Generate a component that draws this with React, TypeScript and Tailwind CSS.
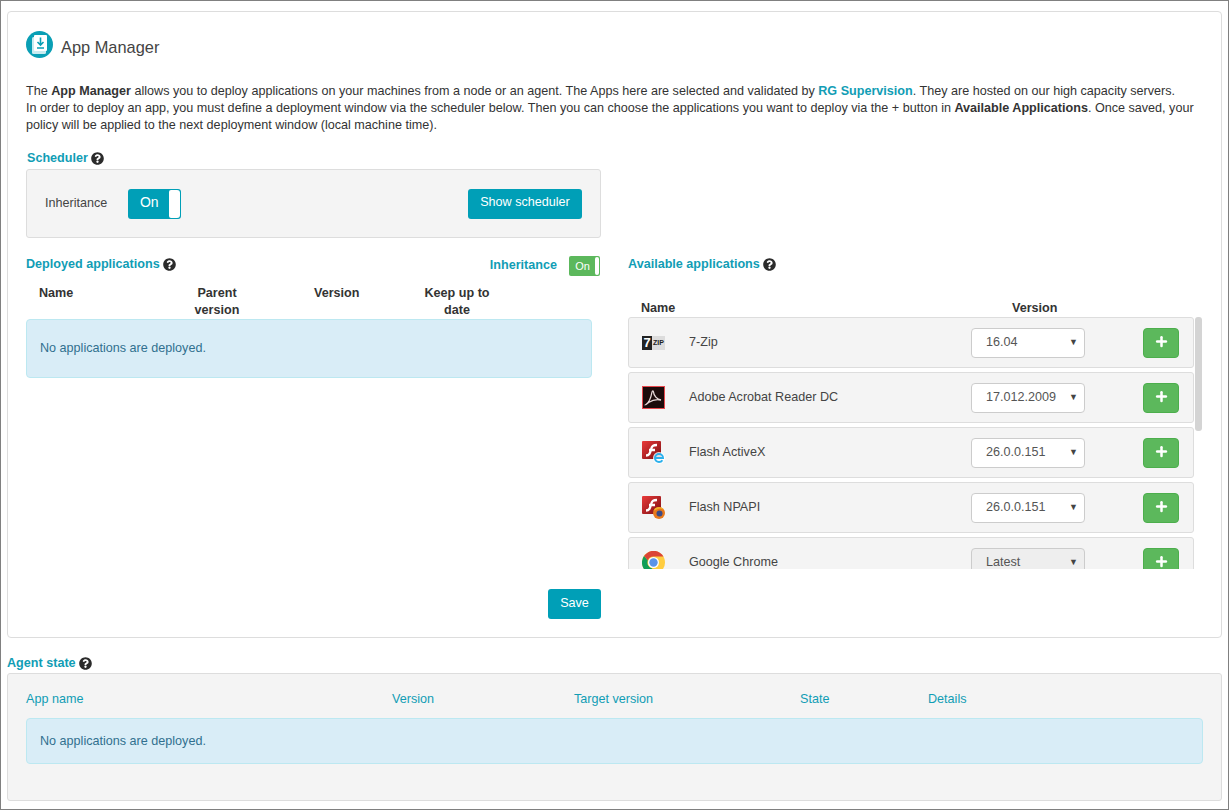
import { Plus } from "lucide-react"
import { FaQuestionCircle } from "react-icons/fa"

const teal = "text-[#119db5]"

function Help() {
  return <FaQuestionCircle size={13} className="text-[#2b2b2b] inline-block" />
}

function SectionTitle({ children }: { children: React.ReactNode }) {
  return (
    <div className={`flex items-center gap-[3px] font-bold text-[12.6px] leading-[17px] ${teal}`}>
      {children} <Help />
    </div>
  )
}

function Toggle({ big }: { big?: boolean }) {
  if (big) return (
    <div className="w-[53px] h-[30px] rounded-[3px] bg-[#009fb7] flex items-center p-[1px]">
      <span className="flex-1 text-center text-white text-[14px] leading-[26px] pb-[3px]">On</span>
      <span className="w-[11px] h-[28px] bg-white rounded-r-[3px] rounded-l-[2px]"></span>
    </div>
  )
  return (
    <div className="w-[31px] h-[20px] rounded-[2px] bg-[#5cb85c] flex items-center p-[1px]">
      <span className="flex-1 text-center text-white text-[11px] leading-[18px]">On</span>
      <span className="w-[4px] h-[18px] bg-white rounded-[2px]"></span>
    </div>
  )
}

function SevenZip() {
  return (
    <div className="w-[23px] h-[14px] flex items-stretch bg-[#dcdcdc]">
      <span className="w-[10px] bg-[#222222] text-white text-[13px] font-bold leading-[14px] text-center">7</span>
      <span className="flex-1 text-[#222] text-[7px] font-bold leading-[14px] text-center">ZIP</span>
    </div>
  )
}

function Acrobat() {
  return (
    <svg width="23" height="23" viewBox="0 0 23 23">
      <rect x="0.5" y="0.5" width="22" height="22" fill="#1d0b0b" stroke="#e8474c" />
      <path d="M4 18.500c3-2 5-7 6-12.500.3-1.500 1.400-1.500 1.500 0 .2 3.500 3.500 7.500 7.500 8-4-1-9.500.6-12.500 2.500-1 .7-2 2-2.500 2z" fill="none" stroke="#e8d8d8" strokeWidth="1.300" />
    </svg>
  )
}

function FlashBase({ id }: { id: string }) {
  return (
    <>
      <defs>
        <linearGradient id={id} x1="0" y1="0" x2="1" y2="1">
          <stop offset="0" stopColor="#ea3a3a" />
          <stop offset="1" stopColor="#7c0f12" />
        </linearGradient>
      </defs>
      <rect x="0" y="0" width="19" height="18" rx="1" fill={`url(#${id})`} />
      <path d="M4 14.500c3.500 0 4-2.500 5-6S11 4 15 4M7 9h6" fill="none" stroke="#fff" strokeWidth="2.300" />
    </>
  )
}

function FlashIE() {
  return (
    <svg width="23" height="23" viewBox="0 0 23 23">
      <FlashBase id="flie" />
      <circle cx="17" cy="17" r="6" fill="#fff" fillOpacity="0.85" />
      <path d="M13 17h8c0-2.300-1.700-4-4-4s-4 1.700-4 4 1.700 4 4 4c1.500 0 2.700-.7 3.400-1.800" fill="none" stroke="#2cb0ec" strokeWidth="2" />
    </svg>
  )
}

function FlashFF() {
  return (
    <svg width="23" height="23" viewBox="0 0 23 23">
      <FlashBase id="flff" />
      <circle cx="17" cy="17" r="6" fill="#e8791c" />
      <circle cx="17.500" cy="17.500" r="3" fill="#3b4a86" />
      <path d="M11.500 15c1-3 3-4 5.500-4 2 0 4 1 5 3-2-1.500-4-2-6-1-1.500.7-3 1-4.500 2z" fill="#f4b32b" />
    </svg>
  )
}

function Chrome() {
  return (
    <svg width="23" height="23" viewBox="0 0 23 23">
      <circle cx="11.500" cy="11.500" r="11.500" fill="#ffcd40" />
      <path d="M2 5a11.500 11.500 0 0 1 19.500 0.500H11.500a6 6 0 0 0-5.700 4z" fill="#db4437" />
      <path d="M2 5l3.800 4.500a6 6 0 0 0 4.500 8L8 22.500A11.500 11.500 0 0 1 2 5z" fill="#0f9d58" />
      <circle cx="11.500" cy="11.500" r="5.500" fill="#fff" />
      <circle cx="11.500" cy="11.500" r="4.200" fill="#5b93e8" />
    </svg>
  )
}

const apps = [
  { name: "7-Zip", version: "16.04", icon: <SevenZip /> },
  { name: "Adobe Acrobat Reader DC", version: "17.012.2009", icon: <Acrobat /> },
  { name: "Flash ActiveX", version: "26.0.0.151", icon: <FlashIE /> },
  { name: "Flash NPAPI", version: "26.0.0.151", icon: <FlashFF /> },
  { name: "Google Chrome", version: "Latest", icon: <Chrome />, disabled: true },
]

function AppRow({ app }: { app: typeof apps[number] }) {
  return (
    <div className="h-[51px] shrink-0 bg-[#f4f4f4] border border-[#dddddd] rounded-[3px] flex items-center">
      <div className="w-[60px] pl-[13px] h-[23px] flex items-center shrink-0">{app.icon}</div>
      <div className="w-[282px] text-[12.6px] text-[#444]">{app.name}</div>
      <div className={`w-[114px] h-[30px] border border-[#cccccc] rounded-[4px] flex items-center justify-between pl-[14px] pr-[6px] text-[12.6px] text-[#555] ${app.disabled ? "bg-[#eeeeee]" : "bg-white"}`}>
        <span className="pb-[1px]">{app.version}</span>
        <span className="text-[9px] text-[#444]">▼</span>
      </div>
      <button className="ml-[58px] w-[36px] h-[30px] bg-[#5cb85c] border border-[#4cae4c] rounded-[4px] flex items-center justify-center pb-[3px]">
        <Plus size={15} strokeWidth={4} className="text-white" />
      </button>
    </div>
  )
}

function Alert({ children }: { children: React.ReactNode }) {
  return (
    <div className="bg-[#d9edf7] border border-[#bce8f1] rounded-[4px] text-[12.6px] text-[#31708f] pl-[13px] flex items-center">
      {children}
    </div>
  )
}

export default function App() {
  return (
    <div className="w-[1229px] h-[810px] overflow-hidden bg-white border border-[#808080] px-[6px] pt-[10px] text-[12.6px] text-[#333]" style={{ fontFamily: "'Liberation Sans', Arial, sans-serif" }}>
      <div className="w-[1215px] h-[627px] border border-[#dddddd] rounded-[4px] px-[18px] pt-[18px]">
        <div className="flex items-center gap-[8px] h-[28px]">
          <svg width="27" height="27" viewBox="0 0 27 27" className="shrink-0">
            <circle cx="13.500" cy="13.500" r="13.500" fill="#0a9fb5" />
            <rect x="6" y="6" width="14" height="17" rx="1.500" fill="#c8ebf0" />
            <rect x="8" y="4" width="13" height="16" rx="1" fill="#fff" />
            <path d="M14.500 6.500v7M11.500 11l3 3 3-3M11 17h7" fill="none" stroke="#0a9fb5" strokeWidth="1.600" />
          </svg>
          <h1 className="text-[16.4px] text-[#444] font-normal leading-[20px] pt-[5px]">App Manager</h1>
        </div>

        <p className="mt-[25px] text-[12.6px] leading-[17px] text-[#333] w-[1172px]">
          The <b>App Manager</b> allows you to deploy applications on your machines from a node or an agent. The Apps here are selected and validated by <b className={teal}>RG Supervision</b>. They are hosted on our high capacity servers.<br />
          In order to deploy an app, you must define a deployment window via the scheduler below. Then you can choose the applications you want to deploy via the + button in <b>Available Applications</b>. Once saved, your policy will be applied to the next deployment window (local machine time).
        </p>

        <div className="mt-[16px] ml-[1px]"><SectionTitle>Scheduler</SectionTitle></div>
        <div className="w-[575px] h-[69px] mt-[2px] bg-[#f4f4f4] border border-[#dddddd] rounded-[3px] flex items-center justify-between pl-[18px] pr-[18px]">
          <div className="flex items-center gap-[21px]">
            <span className="text-[#444] text-[12.6px]">Inheritance</span>
            <Toggle big />
          </div>
          <button className="w-[114px] h-[30px] bg-[#009fb7] rounded-[3px] text-white text-[12.6px] pb-[2px]">Show scheduler</button>
        </div>

        <div className="flex mt-[16px] gap-[27px]">
          <div className="w-[575px]">
            <div className="flex items-center justify-between h-[20px]">
              <SectionTitle>Deployed applications</SectionTitle>
              <div className="flex items-center gap-[12px] pt-[3px] pr-[1px]">
                <span className={`font-bold text-[12.6px] ${teal}`}>Inheritance</span>
                <Toggle />
              </div>
            </div>
            <div className="grid grid-cols-[140px_76px_160px_84px] mt-[11px] h-[34px] font-bold text-[12.6px] leading-[17px] text-[#333] pl-[13px]">
              <div>Name</div>
              <div className="text-center">Parent version</div>
              <div className="pl-[59px]">Version</div>
              <div className="text-center">Keep up to date</div>
            </div>
            <div className="w-[566px] h-[59px] flex">
              <Alert><span className="w-[551px]">No applications are deployed.</span></Alert>
            </div>
          </div>

          <div className="w-[575px]">
            <div className="h-[20px] flex items-center"><SectionTitle>Available applications</SectionTitle></div>
            <div className="grid grid-cols-[343px_1fr] mt-[25px] h-[18px] font-bold text-[12.6px] leading-[18px] text-[#333] pl-[13px]">
              <div>Name</div>
              <div className="pl-[28px]">Version</div>
            </div>
            <div className="flex gap-[1px]">
              <div className="w-[566px] h-[252px] overflow-hidden flex flex-col gap-[4px]">
                {apps.map(a => <AppRow key={a.name} app={a} />)}
              </div>
              <div className="w-[7px] h-[114px] bg-[#d4d4d4] rounded-[3px]"></div>
            </div>
          </div>
        </div>

        <div className="w-[575px] flex justify-end mt-[20px]">
          <button className="w-[53px] h-[30px] bg-[#009fb7] rounded-[3px] text-white text-[12.6px] pb-[2px]">Save</button>
        </div>
      </div>

      <div className="mt-[17px]"><SectionTitle>Agent state</SectionTitle></div>
      <div className="w-[1215px] h-[128px] mt-[1px] bg-[#f4f4f4] border border-[#dddddd] rounded-[3px] px-[18px]">
        <div className={`grid grid-cols-[366px_182px_226px_128px_1fr] mt-[17px] h-[17px] text-[12.6px] leading-[17px] ${teal}`}>
          <div>App name</div>
          <div>Version</div>
          <div>Target version</div>
          <div>State</div>
          <div>Details</div>
        </div>
        <div className="flex mt-[10px] h-[46px]">
          <Alert><span className="w-[1162px]">No applications are deployed.</span></Alert>
        </div>
      </div>
    </div>
  )
}
